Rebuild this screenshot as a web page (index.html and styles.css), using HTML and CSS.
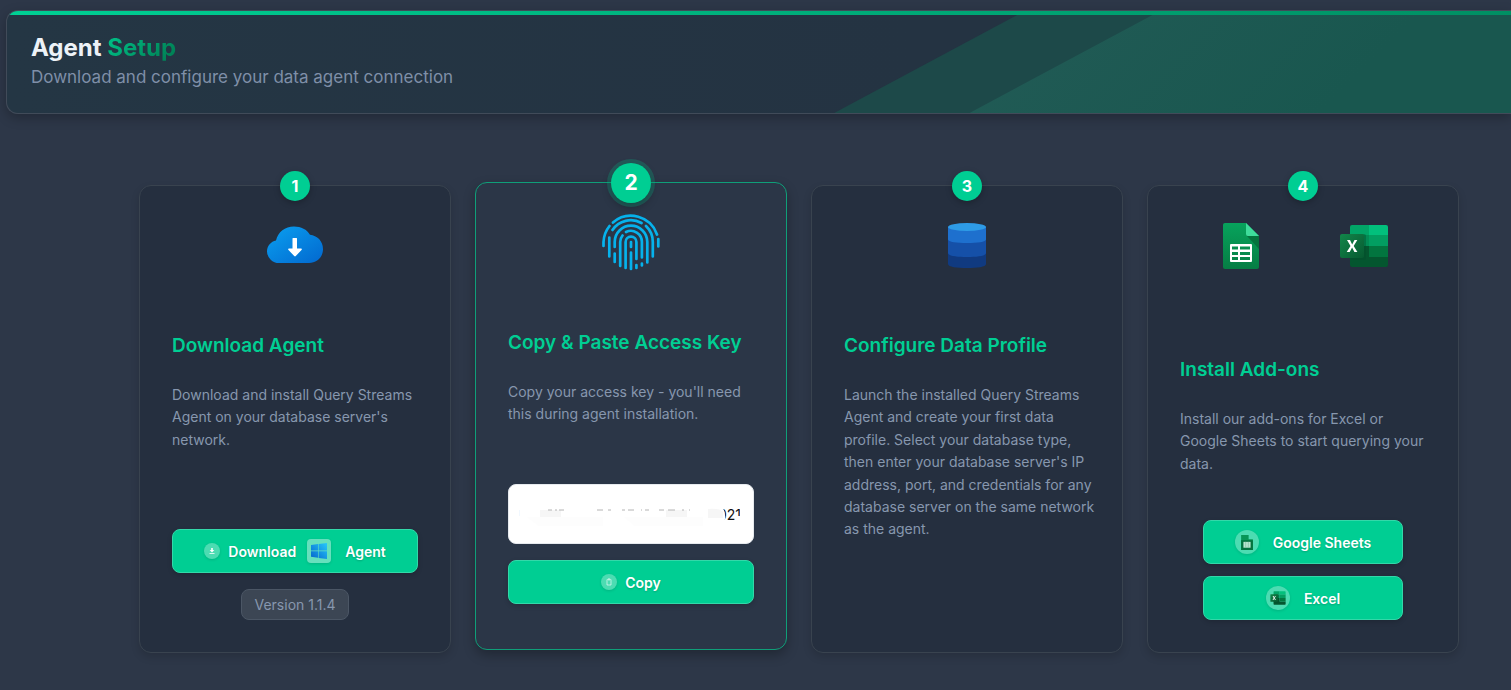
FILE: index.html
```html
<!DOCTYPE html>
<html lang="en">
<head>
<meta charset="utf-8">
<meta name="viewport" content="width=device-width, initial-scale=1">
<title>Agent Setup</title>
<link rel="stylesheet" href="styles.css">
</head>
<body>
<svg class="defs" aria-hidden="true">
  <defs>
    <linearGradient id="cloud" x1="0" y1="0" x2="1" y2="1"><stop offset="0" stop-color="#0aa0f0"/><stop offset="1" stop-color="#0268cf"/></linearGradient>
    <linearGradient id="sheet" x1="0" y1="0" x2="0" y2="1"><stop offset="0" stop-color="#07a35c"/><stop offset="1" stop-color="#067d44"/></linearGradient>
    <linearGradient id="tile" x1="0" y1="0" x2="1" y2="1"><stop offset="0" stop-color="#12864a"/><stop offset="1" stop-color="#075a31"/></linearGradient>
    <linearGradient id="win" x1="0" y1="1" x2="1" y2="0"><stop offset="0" stop-color="#0565cb"/><stop offset="1" stop-color="#27c8fb"/></linearGradient>
    <symbol id="i-sheets" viewBox="0 0 36 46">
      <path fill="url(#sheet)" d="M2 0H23L36 13V44Q36 46 34 46H2Q0 46 0 44V2Q0 0 2 0Z"/>
      <path fill="#05733d" d="M24 13H36V26Z"/>
      <path fill="#3fdc9b" d="M23 0L36 13H25Q23 13 23 11Z"/>
      <path fill="#fff" fill-rule="evenodd" d="M8 21H28Q29 21 29 22V38Q29 39 28 39H8Q7 39 7 38V22Q7 21 8 21ZM9 23.500V26.500H15V23.500ZM17 23.500V26.500H27V23.500ZM9 29V32H15V29ZM17 29V32H27V29ZM9 34V37H15V34ZM17 34V37H27V34Z"/>
    </symbol>
    <symbol id="i-excel" viewBox="0 0 48 44">
      <path fill="#02a567" d="M12 1H29V11H10V3Q10 1 12 1Z"/>
      <path fill="#02c07c" d="M29 1H46Q48 1 48 3V11H29Z"/>
      <path fill="#038c55" d="M10 11H29V22H10Z"/>
      <path fill="#029e61" d="M29 11H48V22H29Z"/>
      <path fill="#04562f" d="M10 22H29V33H48V41Q48 43 46 43H12Q10 43 10 41Z"/>
      <path fill="#02753f" d="M29 22H48V33H29Z"/>
      <rect x="10" y="10" width="16" height="26" rx="2" fill="#034d2a" opacity=".4"/>
      <rect x="0" y="10" width="24" height="24" rx="2" fill="url(#tile)"/>
      <path fill="#fff" d="M7 16H10L12.200 20.500L14.500 16H17.300L13.700 22L17.400 28H14.400L12.100 23.500L9.700 28H6.700L10.500 22Z"/>
    </symbol>
  </defs>
</svg>
<header class="banner">
  <h1 class="banner-title">Agent <span class="accent">Setup</span></h1>
  <p class="banner-text">Download and configure your data agent connection</p>
</header>
<main class="steps">
  <section class="card">
    <span class="badge">1</span>
    <div class="art">
      <svg width="56" height="56" viewBox="0 0 56 56" aria-hidden="true">
        <path fill="url(#cloud)" d="M12 45A12 12 0 0 1 0 33.500C0 28 4 23.500 9 22.500C11 14 18 8.500 27 8.500C34 8.500 40 11.500 43 16.800C50 17.500 56 23 56 31C56 39 50 45 42 45Z"/>
        <path fill="#fff" d="M25.500 20.500Q25.500 20 26 20H29.500Q30 20 30 20.500V30.500H34Q35.500 30.800 34.500 32L28.800 38Q28 38.800 27.200 38L21.500 32Q20.500 30.800 22 30.500H25.500Z"/>
      </svg>
    </div>
    <h2 class="card-title">Download Agent</h2>
    <p class="card-text">Download and install Query Streams Agent on your database server's network.</p>
    <div class="actions">
      <button class="btn" type="button">
        <span class="dot"><svg width="8" height="8" viewBox="0 0 8 8" aria-hidden="true"><path fill="#fff" d="M3.200 1H4.800V3H6.300L4 5.400L1.700 3H3.200ZM1.500 6.200H6.500V7H1.500Z"/></svg></span>
        <span>Download</span>
        <span class="dot dot-square"><svg width="16" height="16" viewBox="0 0 16 16" aria-hidden="true"><path fill="url(#win)" d="M0 2L7 1V7.600H0ZM7.600 .9L16 0V7.600H7.600ZM0 8.200H7V14.800L0 13.800ZM7.600 8.200H16V16L7.600 14.900Z"/></svg></span>
        <span>Agent</span>
      </button>
      <span class="version">Version 1.1.4</span>
    </div>
  </section>

  <section class="card card-active">
    <span class="badge badge-active">2</span>
    <div class="art">
      <svg width="58" height="58" viewBox="0 0 58 58" fill="none" stroke="#06b2ec" stroke-width="2.700" stroke-linecap="round" aria-hidden="true">
        <path d="M11 8.500A27.500 27.500 0 0 1 55 20.500M1.500 32V28A27.500 27.500 0 0 1 7.500 12M56.300 25V32.500"/>
        <path d="M10.500 16A22 22 0 0 1 39.500 9M44 12A22 22 0 0 1 50.800 28V42.500M7.300 23.500V42.500"/>
        <path d="M12.700 33V28A16.300 16.300 0 0 1 45.300 28V48.500M12.700 39.500V48"/>
        <path d="M24 18A11 11 0 0 1 39.900 28V43.500M18.200 52V28A11 11 0 0 1 20.500 21.500M39.900 49.500V51.500"/>
        <path d="M23.600 54V28A5.400 5.400 0 0 1 34.400 28V45M34.400 51V54"/>
        <path d="M29 28V33M29 38.500V55"/>
      </svg>
    </div>
    <h2 class="card-title">Copy &amp; Paste Access Key</h2>
    <p class="card-text">Copy your access key - you'll need this during agent installation.</p>
    <div class="actions actions-key">
      <div class="key-wrap">
        <input class="key" type="text" aria-label="Access key" value="021" readonly>
        <svg class="smudge" viewBox="0 0 228 24" aria-hidden="true">
          <path fill="#fff" d="M0 0H203Q207 7 206 13L203 18H0ZM221 0H228V20H218V10H221Z"/>
          <path fill="#f6f6f6" d="M21 4H42V11H21ZM147 4H168V11H147ZM189 3Q201 2 204 6V12H189Z"/>
          <path fill="#fdfdfd" d="M8 11H84V20H20ZM105 11H184V20H116Z"/>
          <path stroke="#b4b4b4" d="M29 4H33M36 4H38M40 4H45M78 4H84M89 4H92M103 4H106M109 4H115M122 4H123M126 4H130M140 4H145M149 4H156M163 4H165M170 4H171" fill="none"/>
          <path stroke="#e4f1ff" d="M0 4V10" fill="none"/>
        </svg>
      </div>
      <button class="btn" type="button">
        <span class="dot"><svg width="8" height="10" viewBox="0 0 8 10" fill="none" stroke="#fff" stroke-width=".6" aria-hidden="true"><path d="M2.500 2.500H2V8H6V2.500H5.500M3.200 1.800H4.800V3H3.200Z"/></svg></span>
        <span>Copy</span>
      </button>
    </div>
  </section>

  <section class="card">
    <span class="badge">3</span>
    <div class="art">
      <svg width="38" height="46" viewBox="0 0 38 46" aria-hidden="true">
        <path fill="#103a80" d="M0 30H38V41C38 44 29 45 19 45S0 44 0 41Z"/>
        <path fill="#1550a8" d="M0 16H38V30C38 33 29 34 19 34S0 33 0 30Z"/>
        <path fill="#1e70ce" d="M0 4H38V16.500C38 19 29 20 19 20S0 19 0 16.500Z"/>
        <ellipse cx="19" cy="4" rx="19" ry="4" fill="#2e9be6"/>
      </svg>
    </div>
    <h2 class="card-title">Configure Data Profile</h2>
    <p class="card-text">Launch the installed Query Streams Agent and create your first data profile. Select your database type, then enter your database server's IP address, port, and credentials for any database server on the same network as the agent.</p>
  </section>

  <section class="card">
    <span class="badge">4</span>
    <div class="art art-pair">
      <svg width="36" height="46" aria-hidden="true"><use href="#i-sheets"/></svg>
      <svg width="48" height="44" aria-hidden="true"><use href="#i-excel"/></svg>
    </div>
    <h2 class="card-title">Install Add-ons</h2>
    <p class="card-text">Install our add-ons for Excel or Google Sheets to start querying your data.</p>
    <div class="actions actions-addons">
      <button class="btn btn-addon" type="button">
        <span class="dot dot-large"><svg width="12" height="15" viewBox="0 0 36 46" aria-hidden="true"><path fill="#079657" d="M0 0H23V13H36V46H0Z"/><path fill="#04733e" d="M0 16H36V46H0Z"/><path fill="#b9e5cf" d="M7 21H29V39H7Z"/><path stroke="#79bd9c" stroke-width="2" d="M14 21V39M22 21V39"/></svg></span>
        <span>Google Sheets</span>
      </button>
      <button class="btn btn-addon" type="button">
        <span class="dot dot-large"><svg width="16" height="14" aria-hidden="true"><use href="#i-excel"/></svg></span>
        <span>Excel</span>
      </button>
    </div>
  </section>
</main>
</body>
</html>
```
FILE: styles.css
```css
* { box-sizing: border-box; }

body {
  margin: 0;
  min-height: 100vh;
  background: #2d3748;
  font-family: Inter, "Liberation Sans", sans-serif;
  color: #8797ae;
}

.defs { position: absolute; width: 0; height: 0; }

.banner {
  position: relative;
  margin: 10px 0 0 6px;
  padding: 24px 24px 28px;
  border: 1px solid #414b59;
  border-right: 0;
  border-radius: 12px 0 0 12px;
  overflow: hidden;
  background:
    linear-gradient(90deg, #00d094, #008f63) top / 100% 4px no-repeat,
    linear-gradient(90deg, #243644, #243342 60%);
  box-shadow: 0 4px 12px rgb(0 0 0 / 25%);
}

/* Slanted bands on the right of the banner */
.banner::before,
.banner::after {
  content: "";
  position: absolute;
  top: 4px;
  right: 0;
  bottom: 0;
  clip-path: polygon(183px 0, 100% 0, 100% 100%, 0 100%);
}

.banner::before { left: 55%; background: #1d4949; }
.banner::after { left: 64%; background: linear-gradient(135deg, #225b56, #19574f 70%); }

.banner-title {
  margin: 0;
  font-size: 24px;
  line-height: 26px;
  font-weight: 700;
  color: #edf2f7;
}

.accent {
  background: linear-gradient(135deg, #00c48a, #00794f);
  background-clip: text;
  color: transparent;
}

.banner-text {
  margin: 0;
  font-size: 17px;
  line-height: 32px;
  height: 24px;
  color: #7f8fa8;
}

.steps {
  display: grid;
  grid-template-columns: repeat(4, minmax(0, 1fr));
  gap: 24px;
  padding: 71px 52px 36px 139px;
}

.card {
  position: relative;
  display: flex;
  flex-direction: column;
  min-height: 468px;
  padding: 32px;
  border: 1px solid #39434f;
  border-radius: 12px;
  background: #252f3f;
  box-shadow: 0 4px 8px rgb(0 0 0 / 14%);
}

.card-active {
  border-color: #0f9f79;
  background: #2b3647;
  transform: translateY(-3px);
  box-shadow: 0 5px 12px rgb(0 0 0 / 28%);
}

.badge {
  position: absolute;
  top: 0;
  left: 50%;
  width: 30px;
  height: 30px;
  border-radius: 50%;
  background: #00ce93;
  color: #fff;
  font-size: 16px;
  line-height: 30px;
  font-weight: 700;
  text-align: center;
  transform: translate(-50%, -50%);
  box-shadow: 0 2px 6px rgb(0 0 0 / 25%);
}

.badge-active {
  width: 40px;
  height: 40px;
  font-size: 21px;
  line-height: 40px;
  box-shadow: 0 0 0 4px rgb(0 206 147 / 22%), 0 4px 10px rgb(0 0 0 / 30%);
}

.art {
  display: flex;
  align-items: center;
  justify-content: center;
  height: 56px;
}

.art-pair { gap: 81px; padding-left: 4px; margin-bottom: 24px; }

.card-title {
  margin: 56px 0 0;
  font-size: 19px;
  line-height: 32px;
  font-weight: 600;
  color: #00ce93;
  white-space: nowrap;
}

.card-text {
  margin: 22px -8px 0 0;
  font-size: 14px;
  line-height: 1.6;
}

.actions {
  display: flex;
  flex-direction: column;
  align-items: center;
  gap: 16px;
  margin-top: auto;
}

.actions-key { margin-bottom: 13px; }
.actions-addons { gap: 12px; }

.btn {
  display: flex;
  align-items: center;
  justify-content: center;
  gap: 8px;
  width: 100%;
  height: 44px;
  padding: 0 16px;
  border: 1px solid #33d8a9;
  border-radius: 8px;
  background: #00ce93;
  color: #fff;
  font-family: inherit;
  font-size: 14px;
  font-weight: 600;
  text-shadow: 0 1px 2px rgb(0 0 0 / 20%);
  box-shadow: 0 2px 5px rgb(0 0 0 / 16%);
}

.btn-addon { width: 200px; gap: 14px; }

.dot {
  display: flex;
  align-items: center;
  justify-content: center;
  flex: none;
  width: 16px;
  height: 16px;
  border-radius: 50%;
  background: #4cdcb2;
  box-shadow: 0 1px 3px rgb(0 0 0 / 12%);
}

.dot-large { width: 24px; height: 24px; }

.dot-square {
  width: 24px;
  height: 24px;
  margin: 0 6px 0 3px;
  border-radius: 4px;
  background: #66e0bd;
}

.version {
  padding: 0 12px;
  border: 1px solid #4b5665;
  border-radius: 8px;
  background: #3c4654;
  font-size: 14px;
  line-height: 29px;
}

.key-wrap { position: relative; width: 100%; }

.key {
  display: block;
  width: 100%;
  height: 60px;
  padding: 0 12px;
  border: 1px solid #e6eaee;
  border-radius: 8px;
  background: #fff;
  color: #111;
  font: 14px Inter, sans-serif;
  text-align: right;
}

.smudge {
  position: absolute;
  top: 22px;
  left: 11px;
  width: 228px;
  height: 24px;
}
```
